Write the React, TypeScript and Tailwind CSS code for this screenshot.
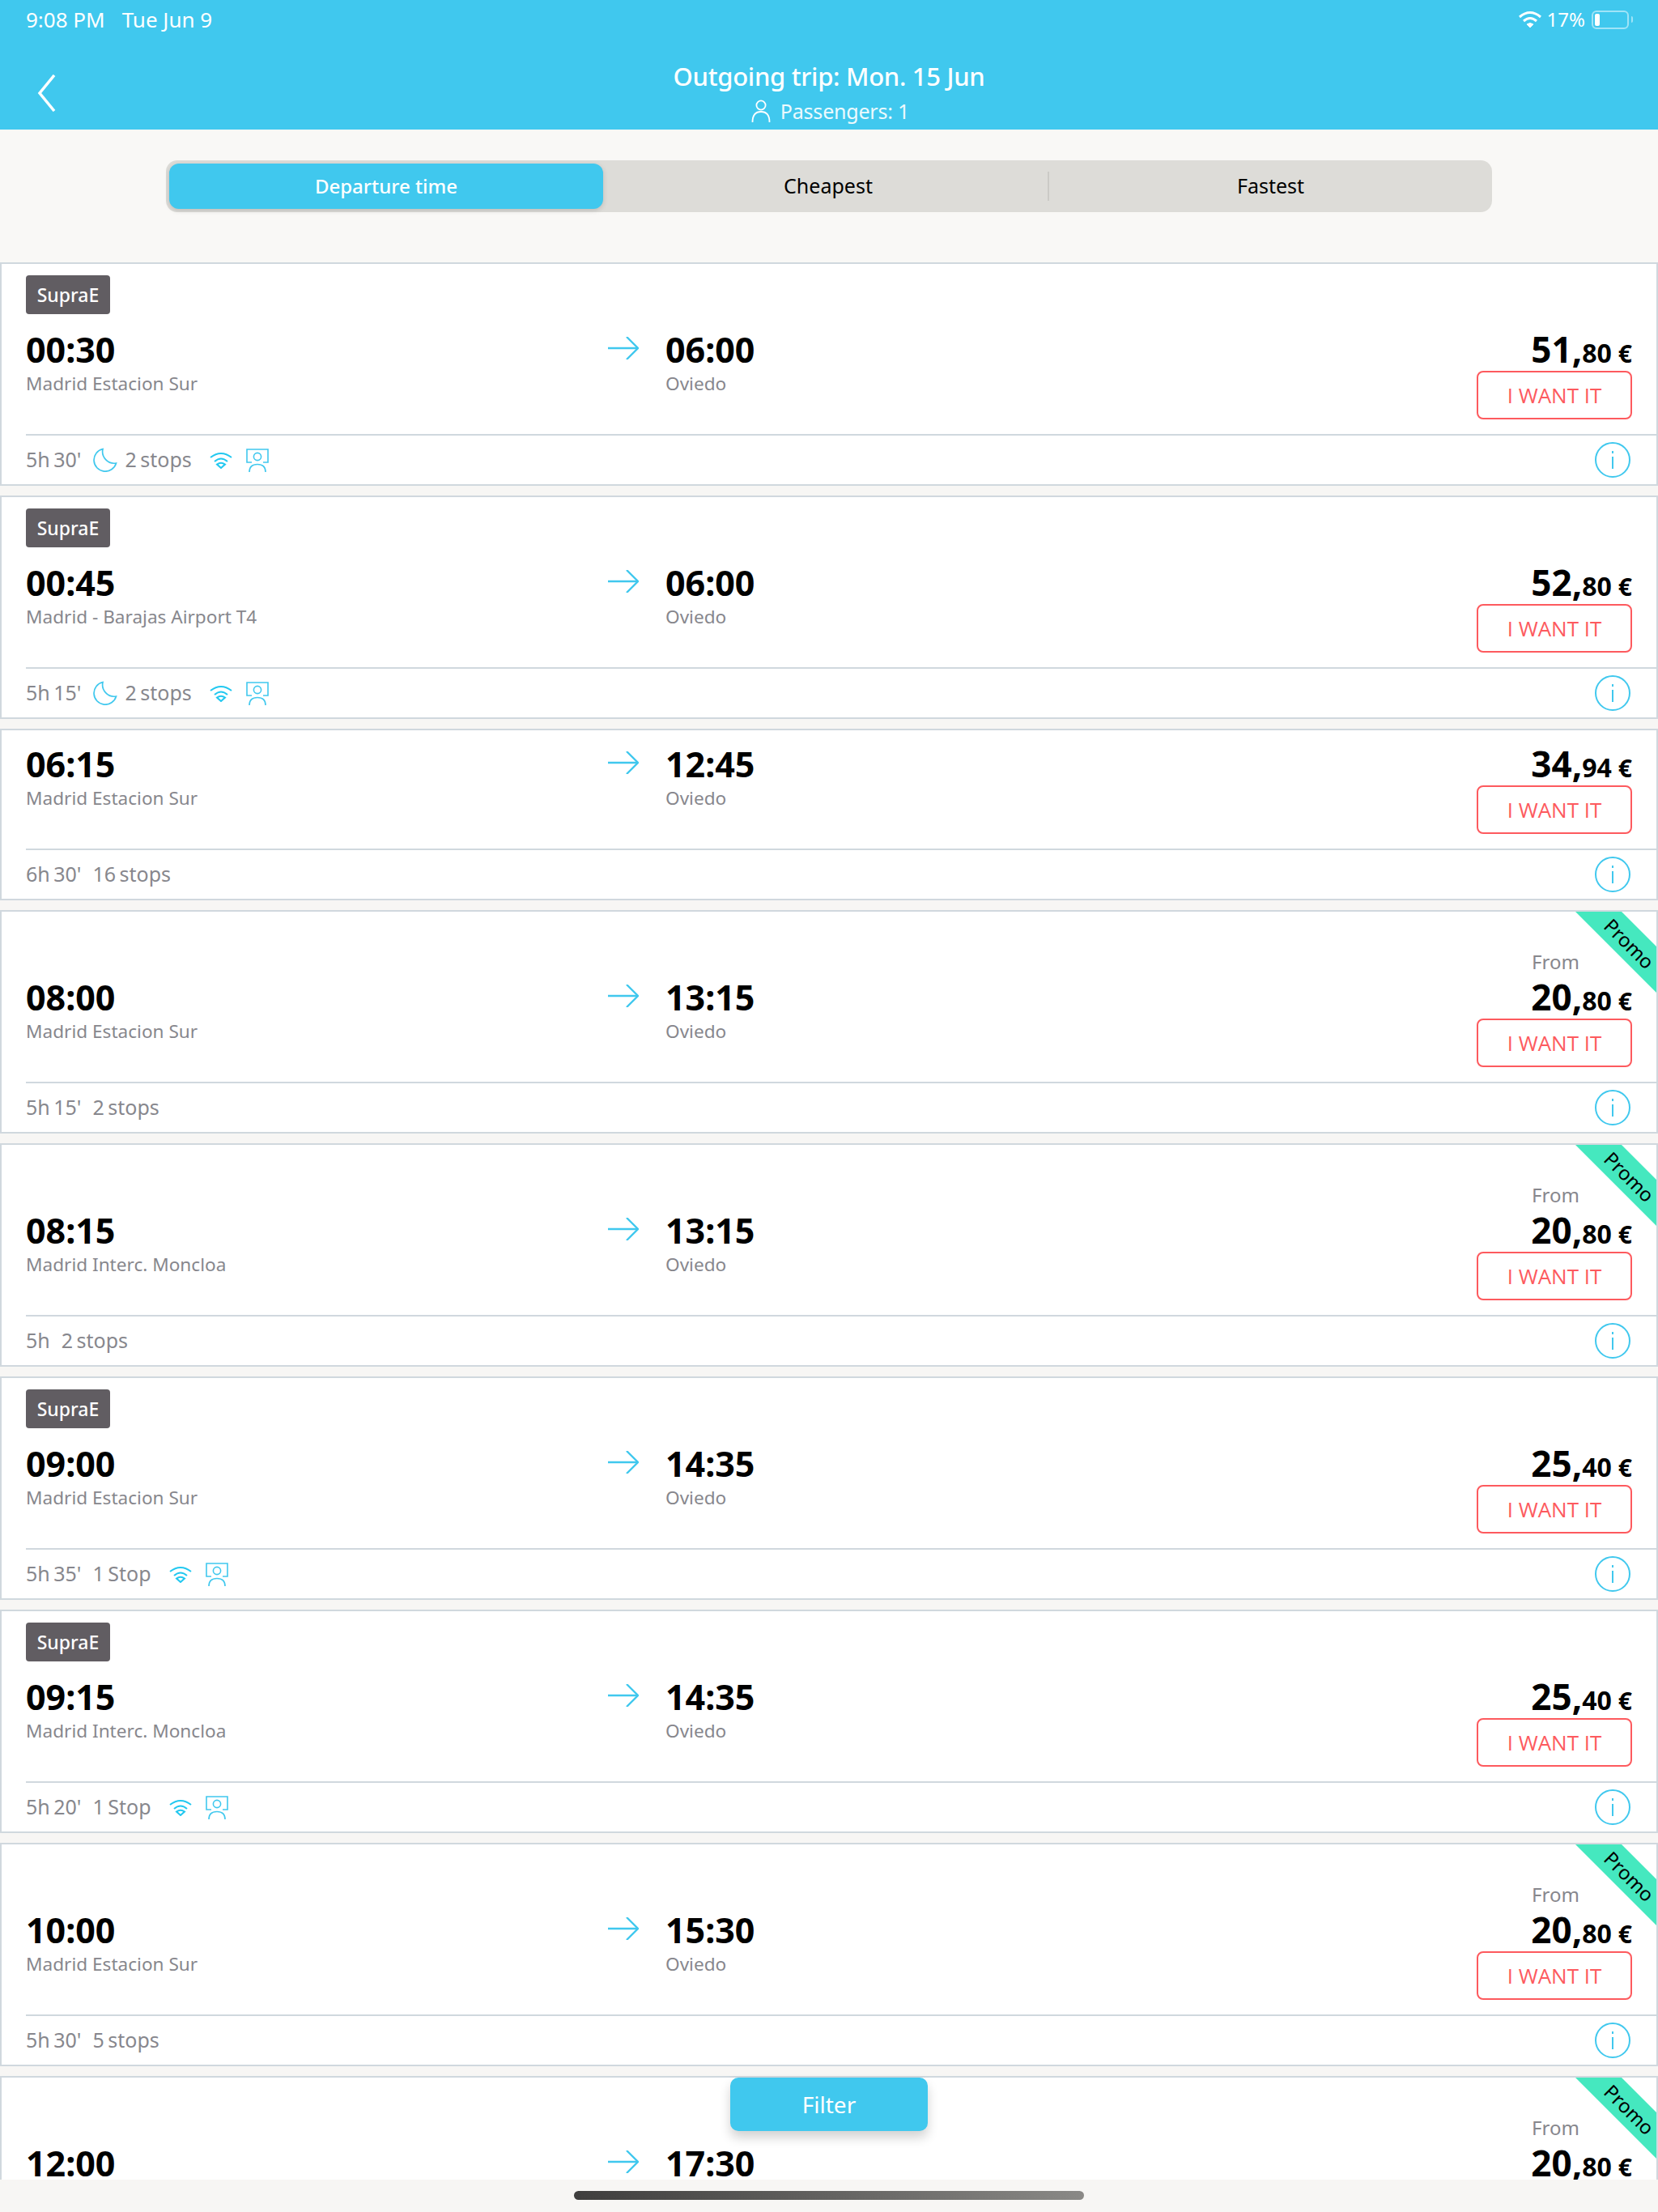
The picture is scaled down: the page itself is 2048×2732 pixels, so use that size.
const font = "[font-family:'Noto_Sans',sans-serif]";

type Trip = {
  dep: string;
  from: string;
  arr: string;
  euros: string;
  cents: string;
  duration: string;
  stops: string;
  supra?: boolean;
  promo?: boolean;
  moon?: boolean;
};

const trips: Trip[] = [
  { dep: "00:30", from: "Madrid Estacion Sur", arr: "06:00", euros: "51", cents: "80", duration: "5h 30'", stops: "2 stops", supra: true, moon: true },
  { dep: "00:45", from: "Madrid - Barajas Airport T4", arr: "06:00", euros: "52", cents: "80", duration: "5h 15'", stops: "2 stops", supra: true, moon: true },
  { dep: "06:15", from: "Madrid Estacion Sur", arr: "12:45", euros: "34", cents: "94", duration: "6h 30'", stops: "16 stops" },
  { dep: "08:00", from: "Madrid Estacion Sur", arr: "13:15", euros: "20", cents: "80", duration: "5h 15'", stops: "2 stops", promo: true },
  { dep: "08:15", from: "Madrid Interc. Moncloa", arr: "13:15", euros: "20", cents: "80", duration: "5h", stops: "2 stops", promo: true },
  { dep: "09:00", from: "Madrid Estacion Sur", arr: "14:35", euros: "25", cents: "40", duration: "5h 35'", stops: "1 Stop", supra: true },
  { dep: "09:15", from: "Madrid Interc. Moncloa", arr: "14:35", euros: "25", cents: "40", duration: "5h 20'", stops: "1 Stop", supra: true },
  { dep: "10:00", from: "Madrid Estacion Sur", arr: "15:30", euros: "20", cents: "80", duration: "5h 30'", stops: "5 stops", promo: true },
  { dep: "12:00", from: "Madrid Estacion Sur", arr: "17:30", euros: "20", cents: "80", duration: "5h 30'", stops: "5 stops", promo: true },
];

function WifiIcon() {
  return (
    <svg width="28" height="21" viewBox="0 0 28 21" fill="none" stroke="#22c8f0" strokeWidth="2">
      <path d="M1 7Q14 -3 27 7" />
      <path d="M6 12Q14 5 22 12" />
      <path d="M14 20L9 15.5Q14 12 19 15.5Z" />
    </svg>
  );
}

function ScreenIcon() {
  return (
    <svg width="28" height="29" viewBox="0 0 28 29" fill="none" stroke="#40c8ee" strokeWidth="1.6">
      <path d="M7 17H1V1H27V17H21" />
      <circle cx="14" cy="10" r="4.6" />
      <path d="M4 29Q4 19.5 14 19.5Q24 19.5 24 29" />
    </svg>
  );
}

function MoonIcon() {
  return (
    <svg width="30" height="30" viewBox="0 0 30 30" fill="none" stroke="#40c8ee" strokeWidth="1.7">
      <path d="M12 1.5A14 14 0 1 0 28.5 19A14.5 14.5 0 0 1 12 1.5Z" />
    </svg>
  );
}

function ArrowIcon() {
  return (
    <svg width="38" height="28" viewBox="0 0 38 28" fill="none" stroke="#40c8ee" strokeWidth="2.4">
      <path d="M0 14H37" />
      <path d="M23 0L37 14L23 28" />
    </svg>
  );
}

function InfoIcon() {
  return (
    <svg width="44" height="44" viewBox="0 0 44 44" fill="none" stroke="#40c8ee" strokeWidth="2">
      <circle cx="22" cy="22" r="21" />
      <path d="M22 18V33" />
      <path d="M22 11V14" />
    </svg>
  );
}

function TripCard({ trip }: { trip: Trip }) {
  const tall = trip.supra || trip.promo;
  return (
    <div className="relative shrink-0 border-2 border-[#d0d8de] bg-white">
      {trip.promo && (
        <>
          <div className="absolute right-0 top-0 h-[100px] w-[100px] bg-[#45e8bf] [clip-path:polygon(0_0,57px_0,100px_43px,100px_100px)]" />
          <span className="absolute right-[-3px] top-[27px] w-[74px] rotate-45 whitespace-nowrap text-center text-[24px] leading-[24px] text-black">
            Promo
          </span>
        </>
      )}
      <div className={`flex pl-[30px] pr-[30px] pt-[14px] pb-[18px] ${tall ? "h-[210px]" : "h-[146px]"}`}>
        <div className="flex-1">
          {tall && (
            <div className="mb-[16px] h-[48px]">
              {trip.supra && (
                <span className="flex h-[48px] w-[104px] items-center justify-center rounded bg-[#615d62] text-[23px] font-medium text-white">
                  SupraE
                </span>
              )}
            </div>
          )}
          <div className="flex pt-[6px]">
            <div className="w-[719px]">
              <p className="text-[43px] font-bold leading-[44px] text-black">{trip.dep}</p>
              <p className="mt-[5px] text-[22.6px] leading-[30px] text-[#87878d]">{trip.from}</p>
            </div>
            <div className="w-[71px] pt-[6px]">
              <ArrowIcon />
            </div>
            <div>
              <p className="text-[43px] font-bold leading-[44px] text-black">{trip.arr}</p>
              <p className="mt-[5px] text-[22.6px] leading-[30px] text-[#87878d]">Oviedo</p>
            </div>
          </div>
        </div>
        <div className="flex w-[192px] flex-col items-end justify-end">
          {trip.promo && (
            <p className="mb-[6px] w-[124px] text-[24px] leading-[30px] text-[#87878d]">From</p>
          )}
          <p className="flex items-baseline font-bold leading-[44px] text-black">
            <span className="text-[44px]">{trip.euros},</span>
            <span className="text-[32px]">{trip.cents}</span>
            <span className="ml-[8px] text-[30px]">€</span>
          </p>
          <button className="mt-[-1px] h-[60px] w-[192px] rounded-lg border-2 border-[#fd5a5e] text-[26px] text-[#fd5a5e] [font-family:'Open_Sans',sans-serif]">
            I WANT IT
          </button>
        </div>
      </div>
      <div className="ml-[30px] h-[2px] bg-[#d0d8de]" />
      <div className="flex h-[60px] items-center pl-[30px] pr-[32px] text-[25px] text-[#87878d] [word-spacing:-2px]">
        <span>{trip.duration}</span>
        {trip.moon ? (
          <>
            <span className="ml-[15px] mr-[9px]">
              <MoonIcon />
            </span>
            <span>{trip.stops}</span>
          </>
        ) : (
          <span className="ml-[14px]">{trip.stops}</span>
        )}
        {trip.supra && (
          <span className="ml-[22px] flex items-center gap-[17px]">
            <WifiIcon />
            <ScreenIcon />
          </span>
        )}
        <span className="ml-auto">
          <InfoIcon />
        </span>
      </div>
    </div>
  );
}

export default function App() {
  return (
    <div className={`relative flex h-[2732px] w-[2048px] flex-col overflow-hidden bg-[#f9f8f6] ${font}`}>
      <header className="relative h-[160px] shrink-0 bg-[#40c8ee] text-white">
        <div className="flex h-[48px] items-center justify-between pl-[32px] pr-[36px] text-[26px]">
          <div className="flex gap-[21px]">
            <span>9:08 PM</span>
            <span>Tue Jun 9</span>
          </div>
          <div className="flex items-center gap-[6px] text-[24px]">
            <svg width="30" height="22" viewBox="0 0 30 22" fill="none" stroke="white" strokeWidth="3">
              <path d="M2 8Q15 -3 28 8" />
              <path d="M7 13Q15 6 23 13" />
              <path d="M15 21L11 17Q15 14 19 17Z" fill="white" strokeWidth="1" />
            </svg>
            <span>17%</span>
            <span className="relative ml-[2px] flex h-[23px] w-[46px] items-center rounded-[6px] border-2 border-white/50 pl-[2px]">
              <span className="h-[15px] w-[6px] rounded-[2px] bg-white" />
              <span className="absolute right-[-7px] h-[8px] w-[2px] rounded-r bg-white/50" />
            </span>
          </div>
        </div>
        <svg className="absolute left-[46px] top-[92px]" width="24" height="46" viewBox="0 0 24 46" fill="none" stroke="white" strokeWidth="3.5">
          <path d="M21 1L3 23L21 45" />
        </svg>
        <div className="flex flex-col items-center pt-[24px]">
          <p className="text-[31px] font-medium leading-[44px] tracking-[-0.3px]">Outgoing trip: Mon. 15 Jun</p>
          <p className="mt-[1px] flex items-center gap-[12px] pl-[3px] text-[25px] leading-[40px] tracking-[-0.2px] text-white/90">
            <svg width="24" height="28" viewBox="0 0 24 28" fill="none" stroke="white" strokeWidth="1.8">
              <circle cx="12" cy="7" r="5.6" />
              <path d="M1.5 28Q1.5 15 12 15Q22.5 15 22.5 28" />
            </svg>
            Passengers: 1
          </p>
        </div>
      </header>

      <div className="ml-[205px] mr-[205px] mt-[38px] grid h-[64px] shrink-0 grid-cols-[536px_551px_1fr] items-center rounded-[14px] bg-[#dddcd8] pl-[4px] text-[25px] text-black">
        <div className="flex h-[56px] w-[536px] items-center justify-center rounded-[12px] bg-[#40c8ee] text-[24px] font-medium text-white shadow-[0_2px_6px_rgba(0,0,0,0.15)]">
          Departure time
        </div>
        <div className="flex h-[36px] items-center justify-center border-r-2 border-[#cbcac6] pl-[7px]">Cheapest</div>
        <div className="text-center">Fastest</div>
      </div>

      <div className="mt-[62px] flex min-h-0 flex-1 flex-col gap-[12px] overflow-hidden bg-[#f7f6f4]">
        {trips.map((trip) => (
          <TripCard key={trip.dep} trip={trip} />
        ))}
      </div>

      <div className="flex h-[40px] shrink-0 items-start justify-center bg-[#f7f6f4] pt-[14px]">
        <div className="h-[11px] w-[630px] rounded-full bg-gradient-to-r from-[#3f3e3d] to-[#8a8986]" />
      </div>

      <button className="absolute left-[902px] top-[2566px] h-[66px] w-[244px] rounded-[10px] bg-[#40c8ee] text-[28px] text-white shadow-[0_8px_14px_rgba(0,0,0,0.18)]">
        Filter
      </button>
    </div>
  );
}
